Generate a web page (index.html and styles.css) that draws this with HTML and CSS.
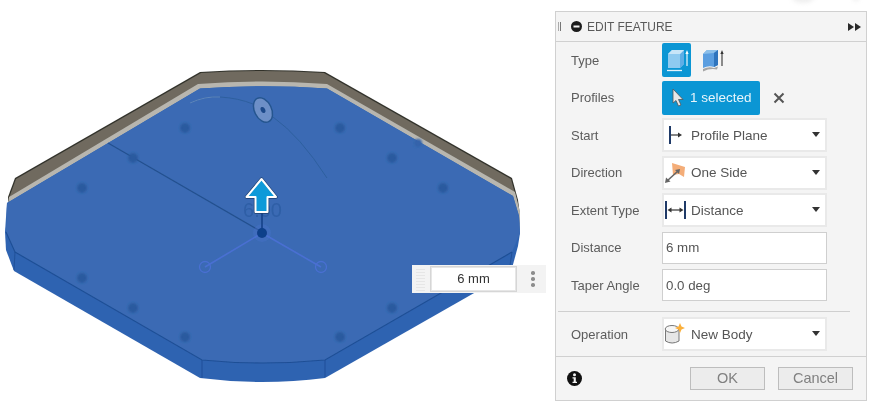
FILE: index.html
```html
<!DOCTYPE html>
<html lang="en">
<head>
<meta charset="utf-8">
<title>Edit Feature</title>
<link rel="stylesheet" href="styles.css">
</head>
<body>
<div class="ghost ghost-a"></div>
<div class="ghost ghost-b"></div>
<main class="stage">
  <svg class="model" width="555" height="406" viewBox="0 0 555 406">
    <defs>
      <filter id="soft" x="-5%" y="-5%" width="110%" height="110%"><feGaussianBlur stdDeviation="0.55"/></filter>
      <filter id="softer" x="-30%" y="-30%" width="160%" height="160%"><feGaussianBlur stdDeviation="0.8"/></filter>
    </defs>
    <g filter="url(#soft)">
      <path d="M15 178 L200 72 Q262 68 325 72 L512 178 L518 200 L520 215 L10 215 L8 197 Z" fill="#33332c"/>
      <path d="M16 179 L201 73 Q262 69 324 73 L511 179 L517 201 L519 215 L10 215 L9 198 Z" fill="#6f6a5f"/>
      <path d="M9 197 L198 84 Q262 79 327 84 L515 192 L520 212 L520 230 L10 230 Z" fill="#b8b6af"/>
      <path d="M7 203 L200 88.500 Q262 84 327 88.500 L513 196 L519 216 L520 233 L518 246 L511 272 L325 378 Q262 386 200 378 L14 271 L6 250 L5 232 Z" fill="#2f63b1"/>
      <path d="M7 203 L200 88.500 Q262 84 327 88.500 L513 196 L519 216 L520 233 L512 252 L325 360 Q262 366 202 360 L15 252 L6 232 Z" fill="#3a6bb4"/>
      <path d="M6 232 L15 252 L202 360 Q262 366 325 360 L512 252" fill="none" stroke="#1f4f96" stroke-width="1.100"/>
      <path d="M15 252 L14 270 M202 360 L202 378 M325 360 L325 377 M512 252 L509 272" fill="none" stroke="#1f4f96" stroke-width="0.900"/>
      <path d="M108 143 L262 232" fill="none" stroke="#24508f" stroke-width="1.200"/>
      <path d="M190 103 Q205 96 220 97 Q238 98 253 104 M273 117 Q300 136 327 178" fill="none" stroke="#2e5f9f" stroke-width="1"/>
      <path d="M190 103 Q205 96 220 97" fill="none" stroke="#6b8fc4" stroke-width="0.800"/>
      <g fill="#2b5a9f" filter="url(#softer)">
        <circle cx="185" cy="128" r="5"/><circle cx="133" cy="158" r="5"/><circle cx="82" cy="188" r="5"/>
        <circle cx="340" cy="128" r="5"/><circle cx="392" cy="158" r="5"/><circle cx="443" cy="188" r="5"/>
        <circle cx="82" cy="278" r="5"/><circle cx="133" cy="308" r="5"/><circle cx="185" cy="337" r="5"/>
        <circle cx="340" cy="337" r="5"/><circle cx="392" cy="308" r="5"/>
        <circle cx="418" cy="143" r="4" fill="#3564ab"/>
      </g>
      <ellipse cx="263" cy="110" rx="8.500" ry="13" transform="rotate(-26 263 110)" fill="#6d8fc7" stroke="#25558f" stroke-width="1.500"/>
      <ellipse cx="263" cy="110" rx="2.200" ry="3.200" transform="rotate(-26 263 110)" fill="#1e4a8a"/>
      <text class="dim" x="262.500" y="217" text-anchor="middle">6.00</text>
      <path d="M205 267 L262 233 L321 267" fill="none" stroke="#4a6fd2" stroke-width="1.600"/>
      <circle cx="262" cy="233" r="9" fill="#4a73cf" opacity="0.35"/>
      <circle cx="205" cy="267" r="5.500" fill="none" stroke="#4a6fd2" stroke-width="1.300"/>
      <circle cx="321" cy="267" r="5.500" fill="none" stroke="#4a6fd2" stroke-width="1.300"/>
      <path d="M262 210 L262 232" stroke="#123f86" stroke-width="1.500"/>
      <circle cx="262" cy="233" r="5" fill="#0f3f8a"/>
      <path d="M261.500 179 L246.500 197 L255.500 197 L255.500 212 L267.500 212 L267.500 197 L276 197 Z" fill="#0d9ad9" stroke="#1e3f6f" stroke-width="3.400" stroke-linejoin="round"/>
      <path d="M261.500 179 L246.500 197 L255.500 197 L255.500 212 L267.500 212 L267.500 197 L276 197 Z" fill="#0d9ad9" stroke="#fff" stroke-width="2" stroke-linejoin="round"/>
    </g>
  </svg>
  <div class="quick">
    <span class="grip"></span>
    <span class="quick-input">6 mm</span>
    <span class="kebab"><i></i><i></i><i></i></span>
  </div>
</main>

<aside class="panel">
  <header class="head">
    <span class="handle"></span>
    <svg class="minus" width="11" height="11" viewBox="0 0 11 11"><circle cx="5.500" cy="5.500" r="5.500" fill="#1c1c1c"/><rect x="2.500" y="4.500" width="6" height="2" fill="#f4f4f4"/></svg>
    <span class="title">EDIT FEATURE</span>
    <svg class="expand" width="13" height="8" viewBox="0 0 13 8"><path d="M0 0 L6 4 L0 8 Z M7 0 L13 4 L7 8 Z" fill="#2a2a2a"/></svg>
  </header>

  <div class="rows">
    <div class="row">
      <span class="label">Type</span>
      <span class="toggle on">
        <svg width="24" height="26" viewBox="0 0 24 26">
          <path d="M3 7 L7 3 L19 3 L19 17 L15 21 L3 21 Z" fill="#8ecaf0"/>
          <path d="M15 7 L19 3 L19 17 L15 21 Z" fill="#5eaee6"/>
          <path d="M3 7 L7 3 L19 3 L15 7 Z" fill="#c7e5f8"/>
          <path d="M2 23.500 L17 23.500" stroke="#e4f3fb" stroke-width="1.300"/>
          <path d="M22 19 L22 6" stroke="#fff" stroke-width="1.100"/>
          <path d="M22 3 L20.400 7 L23.600 7 Z" fill="#fff"/>
        </svg>
      </span>
      <span class="toggle second">
        <svg width="24" height="26" viewBox="0 0 24 26">
          <path d="M3 7 L7 3 L18 3 L18 18 L14 20 Q9 18 3 21 Z" fill="#5b9ee0"/>
          <path d="M3 7 L7 3 L18 3 L14 6 Z" fill="#8cbfe9"/>
          <path d="M14 6 L18 3 L18 18 L14 20 Z" fill="#2f74bd"/>
          <path d="M3 22 Q9 19 14 21 L18 19.500 L17 22.500 Q10 21 3 24.500 Z" fill="#a5a5a5"/>
          <path d="M22 19 L22 6" stroke="#333" stroke-width="1.100"/>
          <path d="M22 3 L20.400 7 L23.600 7 Z" fill="#333"/>
        </svg>
      </span>
    </div>

    <div class="row">
      <span class="label">Profiles</span>
      <span class="selected">
        <svg width="12" height="20" viewBox="0 0 12 20"><path d="M1 1 L1 15 L4 12.500 L6.500 18 L9 17 L6.500 11.500 L11 11.500 Z" fill="#e8e8e8" stroke="#555" stroke-width="0.800"/></svg>
        <span>1 selected</span>
      </span>
      <svg class="clear" width="12" height="12" viewBox="0 0 12 12"><path d="M1.500 1.500 L10.500 10.500 M10.500 1.500 L1.500 10.500" stroke="#555" stroke-width="2"/></svg>
    </div>

    <div class="row">
      <span class="label">Start</span>
      <span class="select">
        <svg class="ico ico-start" width="16" height="20" viewBox="0 0 16 20"><path d="M2 1 L2 19" stroke="#1f3a68" stroke-width="2"/><path d="M3 10 L11 10" stroke="#333" stroke-width="1.200"/><path d="M14 10 L10 7.500 L10 12.500 Z" fill="#333"/></svg>
        <span class="value">Profile Plane</span>
        <i class="caret"></i>
      </span>
    </div>

    <div class="row">
      <span class="label">Direction</span>
      <span class="select">
        <svg class="ico" width="22" height="22" viewBox="0 0 22 22"><path d="M8 1 L21 5 L20 15 L15 12 L9 13 Z" fill="#f4ad78"/><path d="M14 9 L3 19" stroke="#666" stroke-width="1.600"/><path d="M1 21 L2 15.500 L6.500 19.500 Z" fill="#666"/><path d="M16 7 L11 8 L15 12 Z" fill="#666"/></svg>
        <span class="value">One Side</span>
        <i class="caret"></i>
      </span>
    </div>

    <div class="row">
      <span class="label">Extent Type</span>
      <span class="select">
        <svg class="ico ico-extent" width="22" height="20" viewBox="0 0 22 20"><path d="M2 1 L2 19 M21 1 L21 19" stroke="#1f3a68" stroke-width="2"/><path d="M6 10 L17 10" stroke="#333" stroke-width="1.200"/><path d="M3.500 10 L7.500 7.500 L7.500 12.500 Z M19.500 10 L15.500 7.500 L15.500 12.500 Z" fill="#333"/></svg>
        <span class="value">Distance</span>
        <i class="caret"></i>
      </span>
    </div>

    <div class="row">
      <span class="label">Distance</span>
      <span class="input">6 mm</span>
    </div>

    <div class="row">
      <span class="label">Taper Angle</span>
      <span class="input">0.0 deg</span>
    </div>
  </div>

  <hr class="rule">

  <div class="row op">
    <span class="label">Operation</span>
    <span class="select">
      <svg class="ico" width="22" height="22" viewBox="0 0 22 22"><path d="M1.500 6 L1.500 18 Q8 22 15 18 L15 6 Z" fill="#e6e6e6" stroke="#777"/><ellipse cx="8" cy="6" rx="6.800" ry="3.500" fill="#f6f6f6" stroke="#777"/><path d="M16 0 L17.500 3.500 L21 5 L17.500 6.500 L16 10 L14.500 6.500 L11 5 L14.500 3.500 Z" fill="#fbb03b"/></svg>
      <span class="value">New Body</span>
      <i class="caret"></i>
    </span>
  </div>

  <footer class="foot">
    <svg class="info" width="15" height="15" viewBox="0 0 15 15"><circle cx="7.500" cy="7.500" r="7.500" fill="#111"/><circle cx="7.500" cy="3.800" r="1.500" fill="#f4f4f4"/><path d="M5.500 6.200 L8.800 6.200 L8.800 10.800 L10 10.800 L10 12 L5.500 12 L5.500 10.800 L6.700 10.800 L6.700 7.400 L5.500 7.400 Z" fill="#f4f4f4"/></svg>
    <span class="btn ok">OK</span>
    <span class="btn">Cancel</span>
  </footer>
</aside>
</body>
</html>
```

FILE: styles.css
```css
* { box-sizing: border-box; }

html, body { height: 100%; }

body {
  margin: 0;
  display: flex;
  align-items: flex-start;
  overflow: hidden;
  background: #fff;
  font-family: "Liberation Sans", Arial, sans-serif;
  font-size: 13px;
  color: #555;
}

.ghost {
  position: absolute;
  top: -8px;
  border-radius: 50%;
  background: #efefef;
  filter: blur(2px);
}
.ghost-a { left: 792px; width: 22px; height: 11px; }
.ghost-b { left: 852px; width: 8px; height: 9px; }

.stage {
  position: relative;
  flex: 0 0 555px;
  height: 406px;
}

.model { display: block; }

.dim {
  font-family: "Liberation Sans", Arial, sans-serif;
  font-size: 20px;
  fill: #2f5ea6;
}

.quick {
  position: absolute;
  left: 412px;
  top: 265px;
  width: 134px;
  height: 28px;
  display: flex;
  align-items: center;
  background: #f3f3f3;
  filter: blur(0.3px);
}

.grip {
  width: 9px;
  height: 24px;
  margin: 0 5px 0 4px;
  background: repeating-linear-gradient(0deg, #e6e6e6 0 1px, #f3f3f3 1px 3px);
}

.quick-input {
  width: 87px;
  height: 26px;
  border: 1px solid #d6d6d6;
  box-shadow: inset 0 0 0 1px #e6e6e6;
  background: #fff;
  color: #333;
  font-size: 13px;
  line-height: 24px;
  text-align: center;
}

.kebab {
  display: flex;
  flex-direction: column;
  gap: 2.500px;
  margin-left: 14px;
}
.kebab i {
  width: 3.500px;
  height: 3.500px;
  border-radius: 50%;
  background: #8d8d8d;
}

.panel {
  width: 312px;
  height: 390px;
  margin-top: 11px;
  display: flex;
  flex-direction: column;
  background: #f4f4f4;
  border: 1px solid #d0d0d0;
  filter: blur(0.3px);
}

.head {
  height: 30px;
  flex: none;
  display: flex;
  align-items: center;
  border-bottom: 1px solid #d0d0d0;
}

.handle {
  width: 3px;
  height: 9px;
  margin: 0 10px 0 2px;
  border-left: 1px solid #aaa;
  border-right: 1px solid #777;
}

.title {
  margin-left: 5px;
  font-size: 12px;
  color: #5a5a5a;
  flex: 1;
}

.expand { margin-right: 5px; }

.rows {
  flex: none;
  margin-top: -0.500px;
}

.row {
  height: 37.500px;
  display: flex;
  align-items: center;
  padding-left: 15px;
}

.label {
  width: 91px;
  flex: none;
  font-size: 13px;
  color: #5c5c5c;
}

.toggle {
  width: 29px;
  height: 34px;
  margin-right: 8px;
  display: flex;
  align-items: center;
  justify-content: center;
  border-radius: 2px;
}
.toggle.on { background: #0b96d4; }
.toggle.second { margin-left: -2px; }

.selected {
  width: 98px;
  height: 34px;
  display: flex;
  align-items: center;
  gap: 6px;
  padding-left: 10px;
  border-radius: 2px;
  background: #0b96d4;
  color: #e8f5fb;
  font-size: 13.500px;
}

.clear { margin-left: 13px; }

.select, .input {
  width: 165px;
  display: flex;
  align-items: center;
  background: #fff;
  color: #555;
}

.select {
  position: relative;
  height: 34px;
  border: 2px solid #e9e9e9;
  padding-left: 2px;
  font-size: 13.500px;
}

.input {
  height: 32px;
  border: 1px solid #cfcfcf;
  padding-left: 3px;
  font-size: 13.300px;
}

.ico {
  flex: none;
  position: absolute;
  left: 0;
  top: 4px;
}
.ico-start { left: 4px; top: 5px; }
.ico-extent { left: 0; top: 5px; }

.value { margin-left: 25px; }

.caret {
  position: absolute;
  right: 5px;
  top: 12px;
  width: 0;
  height: 0;
  border-left: 4px solid transparent;
  border-right: 4px solid transparent;
  border-top: 5px solid #333;
}

.rule {
  width: 292px;
  height: 1px;
  margin: 7px 0 0 2px;
  border: 0;
  background: #cfcfcf;
}

.op { height: 44px; }

.foot {
  flex: 1;
  display: flex;
  align-items: center;
  border-top: 1px solid #d0d0d0;
  padding: 0 13px 0 11px;
}

.info { margin-right: auto; }

.btn {
  width: 75px;
  height: 23px;
  margin-left: 13px;
  border: 1px solid #bdbdbd;
  background: #ececec;
  color: #808080;
  font-size: 14.500px;
  line-height: 21px;
  text-align: center;
}
```
